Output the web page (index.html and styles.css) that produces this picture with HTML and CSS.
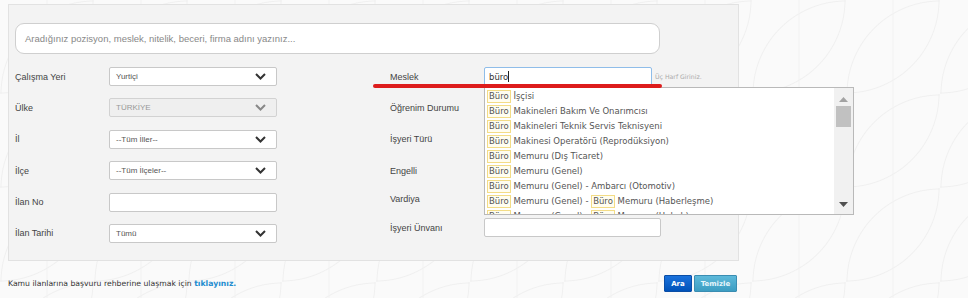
FILE: index.html
```html
<!DOCTYPE html>
<html lang="tr">
<head>
<meta charset="UTF-8" />
<title>İlan Arama</title>
<link rel="stylesheet" href="styles.css">
</head>
<body>

<div class="panel">
  <div class="search-box">Aradığınız pozisyon, meslek, nitelik, beceri, firma adını yazınız...</div>

  <div class="form">
    <div class="col col-left">
      <div class="row">
        <span class="label">Çalışma Yeri</span>
        <div class="select">Yurtiçi<svg width="11" height="7" viewBox="0 0 11 7"><path d="M1 1l4.5 4.5L10 1" fill="none" stroke="#333" stroke-width="2"/></svg></div>
      </div>
      <div class="row">
        <span class="label">Ülke</span>
        <div class="select disabled">TÜRKİYE<svg width="11" height="7" viewBox="0 0 11 7"><path d="M1 1l4.5 4.5L10 1" fill="none" stroke="#888" stroke-width="2"/></svg></div>
      </div>
      <div class="row">
        <span class="label">İl</span>
        <div class="select">--Tüm İller--<svg width="11" height="7" viewBox="0 0 11 7"><path d="M1 1l4.5 4.5L10 1" fill="none" stroke="#333" stroke-width="2"/></svg></div>
      </div>
      <div class="row">
        <span class="label">İlçe</span>
        <div class="select">--Tüm İlçeler--<svg width="11" height="7" viewBox="0 0 11 7"><path d="M1 1l4.5 4.5L10 1" fill="none" stroke="#333" stroke-width="2"/></svg></div>
      </div>
      <div class="row">
        <span class="label">İlan No</span>
        <div class="text-input"></div>
      </div>
      <div class="row">
        <span class="label">İlan Tarihi</span>
        <div class="select">Tümü<svg width="11" height="7" viewBox="0 0 11 7"><path d="M1 1l4.5 4.5L10 1" fill="none" stroke="#333" stroke-width="2"/></svg></div>
      </div>
    </div>

    <div class="col col-right">
      <div class="row meslek-row">
        <span class="label">Meslek</span>
        <div class="text-input focused">büro<span class="caret"></span></div>
        <span class="hint">Üç Harf Giriniz.</span>
        <div class="red-mark"></div>

        <div class="autocomplete">
          <ul class="items">
            <li><span class="hl">Büro</span> İşçisi</li>
            <li><span class="hl">Büro</span> Makineleri Bakım Ve Onarımcısı</li>
            <li><span class="hl">Büro</span> Makineleri Teknik Servis Teknisyeni</li>
            <li><span class="hl">Büro</span> Makinesi Operatörü (Reprodüksiyon)</li>
            <li><span class="hl">Büro</span> Memuru (Dış Ticaret)</li>
            <li><span class="hl">Büro</span> Memuru (Genel)</li>
            <li><span class="hl">Büro</span> Memuru (Genel) - Ambarcı (Otomotiv)</li>
            <li><span class="hl">Büro</span> Memuru (Genel) - <span class="hl">Büro</span> Memuru (Haberleşme)</li>
            <li><span class="hl">Büro</span> Memuru (Genel) - <span class="hl">Büro</span> Memuru (Hukuk)</li>
          </ul>
          <div class="scrollbar">
            <svg width="9" height="5" viewBox="0 0 9 5"><path d="M0 5L4.5 0L9 5z" fill="#a3a3a3"/></svg>
            <div class="thumb"></div>
            <div class="track-space"></div>
            <svg width="9" height="5" viewBox="0 0 9 5"><path d="M0 0L4.5 5L9 0z" fill="#505050"/></svg>
          </div>
        </div>
      </div>
      <div class="row">
        <span class="label">Öğrenim Durumu</span>
        <div class="select"></div>
      </div>
      <div class="row">
        <span class="label">İşyeri Türü</span>
        <div class="select"></div>
      </div>
      <div class="row">
        <span class="label">Engelli</span>
        <div class="select"></div>
      </div>
      <div class="row row-tight">
        <span class="label">Vardiya</span>
        <div class="select"></div>
      </div>
      <div class="row row-tight">
        <span class="label">İşyeri Ünvanı</span>
        <div class="text-input wide"></div>
      </div>
    </div>
  </div>
</div>

<div class="footer">
  <p class="guide">Kamu ilanlarına başvuru rehberine ulaşmak için <a href="#">tıklayınız.</a></p>
  <div class="buttons">
    <button class="btn btn-search">Ara</button>
    <button class="btn btn-clear">Temizle</button>
  </div>
</div>

</body>
</html>
```

FILE: styles.css
```css
body {
  margin: 0;
  padding: 4px 8px;
  font-family: "DejaVu Sans", Verdana, sans-serif;
  color: #444;
  background-color: #fafafa;
  background-image:
    radial-gradient(circle at 0 0, transparent 92px, #f0f0f0 93px, transparent 94px),
    radial-gradient(circle at 100% 100%, transparent 92px, #f0f0f0 93px, transparent 94px),
    linear-gradient(90deg, transparent 46px, #f2f2f2 47px, transparent 48px);
  background-size: 94px 94px;
}
.panel {
  width: 731px;
  height: 257px;
  box-sizing: border-box;
  background: #f3f3f3;
  border: 1px solid #e2e2e2;
  padding: 18px 6px 0 6px;
}
.search-box {
  width: 645px;
  height: 31px;
  box-sizing: border-box;
  background: #fff;
  border: 1px solid #cfcfcf;
  border-radius: 9px;
  padding: 0 9px;
  display: flex;
  align-items: center;
  font-family: "Liberation Sans", Arial, sans-serif;
  font-size: 9.5px;
  color: #888;
}
.form {
  display: flex;
  margin-top: 13px;
}
.col {
  display: flex;
  flex-direction: column;
}
.col-left {
  width: 375px;
}
.row {
  display: flex;
  align-items: center;
  height: 19px;
  margin-top: 12.4px;
}
.row:first-child {
  margin-top: 0;
}
.row-tight {
  margin-top: 9.5px;
}
.label {
  width: 94px;
  flex: none;
  font-family: "Liberation Sans", Arial, sans-serif;
  font-size: 9px;
  color: #444;
}
.select,
.text-input {
  width: 168px;
  height: 19px;
  box-sizing: border-box;
  background: #fff;
  border: 1px solid #c8c8c8;
  border-radius: 2px;
  display: flex;
  align-items: center;
  justify-content: space-between;
  padding: 0 10px 0 6px;
  font-family: "Liberation Sans", Arial, sans-serif;
  font-size: 8px;
  color: #555;
}
.select.disabled {
  background: #efefef;
  color: #999;
  border-color: #d2d2d2;
}
.text-input.wide {
  width: 177px;
}
.meslek-row {
  position: relative;
}
.text-input.focused {
  justify-content: flex-start;
  border-color: #8fbde9;
  padding-left: 4px;
  font-family: "DejaVu Sans", Verdana, sans-serif;
  font-size: 8.5px;
  color: #333;
}
.caret {
  width: 1px;
  height: 11px;
  background: #222;
}
.hint {
  margin-left: 3px;
  font-size: 6.2px;
  color: #aaa;
  white-space: nowrap;
}
.red-mark {
  position: absolute;
  left: -17px;
  top: 17px;
  width: 289px;
  height: 4px;
  border-radius: 2px;
  background: #dd1c1c;
  z-index: 3;
}
.autocomplete {
  position: absolute;
  left: 94px;
  top: 20px;
  width: 370px;
  height: 128px;
  box-sizing: border-box;
  background: #fff;
  border: 1px solid #b9b9b9;
  display: flex;
  z-index: 2;
}
.items {
  flex: 1;
  list-style: none;
  margin: 0;
  padding: 1px 0 0 2px;
  overflow: hidden;
}
.items li {
  height: 15px;
  line-height: 15px;
  font-size: 8.5px;
  color: #555;
  white-space: nowrap;
}
.hl {
  display: inline-block;
  line-height: 11px;
  padding: 0 1px;
  background: #fffdf0;
  border: 1px solid #f3dc86;
}
.scrollbar {
  width: 19px;
  flex: none;
  background: #f1f1f1;
  display: flex;
  flex-direction: column;
  align-items: center;
  padding: 9px 0 7px 0;
}
.thumb {
  width: 15px;
  height: 21px;
  margin-top: 4px;
  background: #c1c1c1;
}
.track-space {
  flex: 1;
}
.footer {
  width: 731px;
  display: flex;
  justify-content: space-between;
  align-items: center;
  margin-top: 14px;
}
.guide {
  margin: 0;
  font-size: 7.7px;
  color: #333;
}
.guide a {
  color: #1e8ccf;
  font-weight: bold;
  text-decoration: none;
}
.buttons {
  display: flex;
  gap: 2px;
  margin-right: 2px;
}
.btn {
  height: 17px;
  padding: 0;
  border-radius: 1px;
  font-family: "DejaVu Sans", Verdana, sans-serif;
  font-weight: bold;
  font-size: 7px;
  cursor: pointer;
}
.btn-search {
  width: 28px;
  color: #fff;
  background: linear-gradient(#1b72dc, #0052b9);
  border: 1px solid #0b4ea6;
}
.btn-clear {
  width: 43px;
  color: #e6f5fb;
  background: linear-gradient(#5db9da, #3c9dc2);
  border: 1px solid #3a8db2;
}
```
